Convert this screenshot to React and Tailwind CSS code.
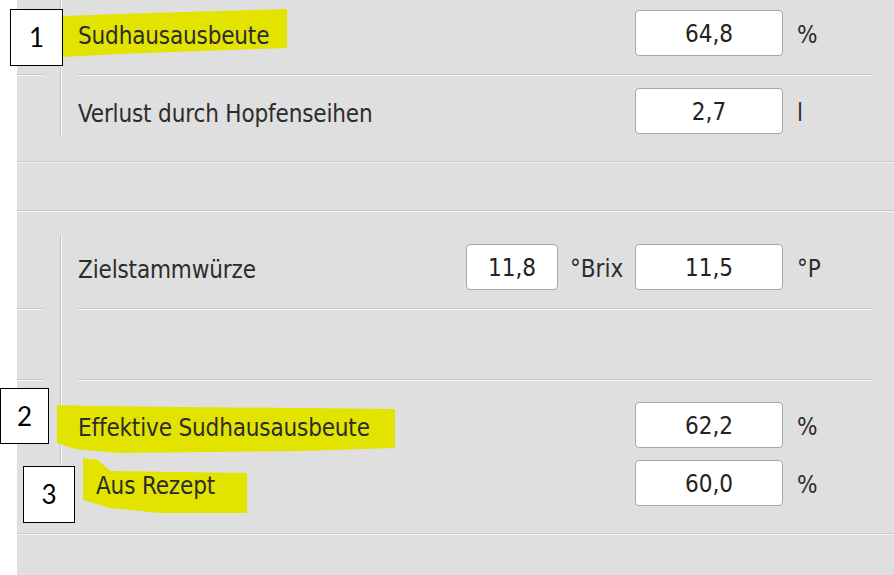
import React from 'react';

const font = "font-['DejaVu_Sans_Condensed','DejaVu_Sans',sans-serif] [font-stretch:condensed]";

const Field = ({ value, w = 'w-[148px]' }) => (
    <div className={`${w} h-[46px] bg-white border border-[#a9a9a9] rounded-[4px] flex items-center justify-center pt-[2px] text-[24px] text-[#222]`}>
        {value}
    </div>
);

const Unit = ({ children }) => (
    <div className="w-[89px] pl-[14px] pt-[4px] text-[24px] text-[#2c2c2c]">{children}</div>
);

const Row = ({ label, value, unit, indent, className = '' }) => (
    <div className={`flex items-center h-[46px] ${className}`}>
        <div className={`flex-1 relative z-[1] pt-[5px] text-[24px] tracking-[-0.15px] text-[#2c2c2c] ${indent ? 'pl-[18px]' : ''}`}>{label}</div>
        <Field value={value} />
        <Unit>{unit}</Unit>
    </div>
);

const Divider = ({ className = '' }) => (
    <div className={`flex flex-col ${className}`}>
        <div className="h-px bg-[#c9c9c9]" />
        <div className="h-px bg-[#f4f4f4]" />
    </div>
);

const VRule = ({ className = '' }) => (
    <div className={`flex ${className}`}>
        <div className="w-px bg-[#c6c6c6]" />
        <div className="w-px bg-[#f6f6f6]" />
    </div>
);

const Marker = ({ n, className }) => (
    <div className={`absolute z-20 bg-white border border-black flex items-center justify-center font-['Lato',sans-serif] text-[26px] text-black ${className}`}>
        {n}
    </div>
);

export default function App() {
    return (
        <div className={`relative flex w-[894px] h-[575px] overflow-hidden bg-white ${font}`}>
            <div className="w-[17px] shrink-0 bg-white" />
            <div className="flex-1 flex flex-col bg-[#dfdfdf]">

                {/* Section: Sudhausausbeute */}
                <div className="flex h-[161px]">
                    <div className="w-[43px] shrink-0">
                        <Divider className="mt-[74px] w-[28px]" />
                    </div>
                    <VRule className="h-[136px]" />
                    <div className="flex-1 pl-[16px] pr-[22px]">
                        <Row label="Sudhausausbeute" value="64,8" unit="%" className="mt-[10px]" />
                        <Divider className="mt-[18px]" />
                        <Row label="Verlust durch Hopfenseihen" value="2,7" unit="l" className="mt-[12px]" />
                    </div>
                </div>
                <Divider />

                <div className="h-[47px]" />
                <Divider />

                {/* Section: Stammwürze */}
                <div className="flex h-[321px]">
                    <div className="w-[43px] shrink-0">
                        <Divider className="mt-[96px] w-[28px]" />
                        <Divider className="mt-[69px] w-[28px]" />
                    </div>
                    <VRule className="mt-[23px] h-[230px]" />
                    <div className="flex-1 pl-[16px] pr-[22px]">
                        <div className="flex items-center h-[46px] mt-[32px]">
                            <div className="flex-1 pt-[5px] text-[24px] tracking-[-0.15px] text-[#2c2c2c]">Zielstammwürze</div>
                            <Field value="11,8" w="w-[92px]" />
                            <div className="w-[77px] pl-[12px] pt-[4px] text-[24px] text-[#2c2c2c]">°Brix</div>
                            <Field value="11,5" />
                            <Unit>°P</Unit>
                        </div>
                        <Divider className="mt-[18px]" />
                        <Divider className="mt-[69px]" />
                        <Row label="Effektive Sudhausausbeute" value="62,2" unit="%" className="mt-[21px]" />
                        <Row label="Aus Rezept" value="60,0" unit="%" indent className="mt-[12px]" />
                    </div>
                </div>
                <Divider />
                <div className="flex-1" />
            </div>

            {/* Highlighter marks */}
            <svg className="absolute inset-0 pointer-events-none" width="894" height="575">
                <polygon fill="#e3e300" points="62,16 150,13 220,11 287,9 287,48 200,51 120,54 62,57" />
                <polygon fill="#e3e300" points="57,405 90,406 395,409 395,448 300,451 120,453 75,449 57,443" />
                <polygon fill="#e3e300" points="83,458 98,460 110,471 247,473 247,513 160,513 110,508 83,500" />
            </svg>

            <Marker n="1" className="left-[10px] top-[9px] w-[53px] h-[57px]" />
            <Marker n="2" className="left-0 top-[388px] w-[49px] h-[56px]" />
            <Marker n="3" className="left-[23px] top-[466px] w-[52px] h-[57px]" />
        </div>
    );
}
